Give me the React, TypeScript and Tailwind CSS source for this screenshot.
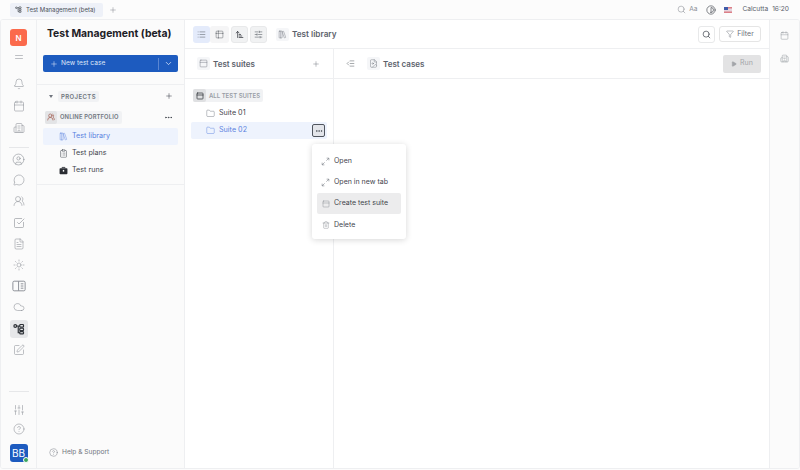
import {
  Bell, Calendar, Building2, CircleUser, MessageCircle, UsersRound, SquareCheckBig, FileText, Sun, Cloud,
  SquarePen, SlidersVertical, CircleHelp, Plus, ChevronDown, Ellipsis, LibraryBig, ClipboardList, List, Table2,
  ArrowUpNarrowWide, SlidersHorizontal, Search, Funnel, Play, Folder, PanelTop, Trash2, Equal, Contrast, IndentDecrease, FileImage,
} from "lucide-react";

const font = "[font-family:Inter,'Liberation_Sans',sans-serif]";

// flow icon used for the active rail item and the tab
function FlowIcon({ size }: { size: number }) {
  return (
    <svg width={size} height={size} viewBox="0 0 16 16" fill="none" stroke="currentColor" strokeWidth="1.6">
      <circle cx="3" cy="4" r="1.8" />
      <rect x="9" y="2" width="5" height="3.6" rx="1" />
      <rect x="9" y="7" width="5" height="3.2" rx="1" />
      <rect x="9" y="11.4" width="5" height="3.2" rx="1" />
      <path d="M5 4h4M7 4v9h2" />
    </svg>
  );
}

function BookPanelIcon() {
  return (
    <svg width="14" height="14" viewBox="0 0 16 16" fill="none" stroke="currentColor" strokeWidth="1.1">
      <rect x="1" y="2.5" width="14" height="11" rx="1.5" />
      <path d="M7.5 2.5v11M10 5.5h3M10 8h3M10 10.5h3" />
    </svg>
  );
}

function BriefcaseSolid() {
  return (
    <svg width="9" height="9" viewBox="0 0 16 16">
      <path d="M5.5 4V2.5h5V4" fill="none" stroke="#2a2d33" strokeWidth="1.5" />
      <rect x="1" y="4" width="14" height="10.5" rx="1.5" fill="#2a2d33" />
      <rect x="6.8" y="7" width="2.4" height="3" fill="#fff" />
    </svg>
  );
}

function ExpandIcon() {
  return (
    <svg width="9" height="9" viewBox="0 0 16 16" fill="none" stroke="currentColor" strokeWidth="1">
      <path d="M9.5 6.5 14 2M10 2h4v4M6.5 9.5 2 14M2 10v4h4" />
    </svg>
  );
}

function RailIcon({ children, active }: { children: React.ReactNode; active?: boolean }) {
  return (
    <div className={`w-[18px] h-[18px] rounded-[3px] flex items-center justify-center ${active ? "bg-[#e6e7e9] text-[#2f3339]" : "text-[#8b8f96]"}`}>
      {children}
    </div>
  );
}

function Rail() {
  return (
    <div className="w-[36px] shrink-0 border-r border-[#eeeff1] flex flex-col items-center pt-[9px] pb-[6px]">
      <div className="w-[17px] h-[17px] rounded-[3px] bg-[#fb6a4c] text-white text-[8px] font-semibold flex items-center justify-center">N</div>
      <Equal size={12} strokeWidth={1.1} className="text-[#8b8f96] mt-[5px]" />
      <div className="flex flex-col items-center gap-[4px] mt-[12px]">
        <RailIcon><Bell size={12} strokeWidth={1.1} /></RailIcon>
        <RailIcon><Calendar size={12} strokeWidth={1.1} /></RailIcon>
        <RailIcon><Building2 size={12} strokeWidth={1.1} /></RailIcon>
      </div>
      <div className="w-[20px] h-px bg-[#e6e7e9] mt-[10px]" />
      <div className="flex flex-col items-center gap-[3.2px] mt-[2px]">
        <RailIcon><CircleUser size={13} strokeWidth={1.1} /></RailIcon>
        <RailIcon><MessageCircle size={12} strokeWidth={1.1} /></RailIcon>
        <RailIcon><UsersRound size={12} strokeWidth={1.1} /></RailIcon>
        <RailIcon><SquareCheckBig size={12} strokeWidth={1.2} /></RailIcon>
        <RailIcon><FileText size={12} strokeWidth={1.1} /></RailIcon>
        <RailIcon><Sun size={12} strokeWidth={1.1} /></RailIcon>
        <RailIcon><BookPanelIcon /></RailIcon>
        <RailIcon><Cloud size={12} strokeWidth={1.1} /></RailIcon>
        <RailIcon active><FlowIcon size={12} /></RailIcon>
        <RailIcon><SquarePen size={12} strokeWidth={1.1} /></RailIcon>
      </div>
      <div className="flex-1" />
      <div className="w-[20px] h-px bg-[#e6e7e9] mb-[9px]" />
      <RailIcon><SlidersVertical size={12} strokeWidth={1.1} /></RailIcon>
      <div className="mt-[1px]"><RailIcon><CircleHelp size={12} strokeWidth={1.1} /></RailIcon></div>
      <div className="relative w-[18px] h-[18px] rounded-[3px] bg-[#1d5bbf] text-white text-[10px] flex items-center justify-center mt-[6px]">
        BB
        <span className="absolute right-[-1px] bottom-[-1px] w-[6px] h-[6px] rounded-full bg-[#3aa55d] border border-white" />
      </div>
    </div>
  );
}

function Sidebar() {
  return (
    <div className="w-[148px] shrink-0 border-r border-[#eeeff1] flex flex-col">
      <div className="h-[65px] px-[10px] border-b border-[#eeeff1] shrink-0">
        <div className="h-[28px] flex items-center text-[10.4px] font-bold text-[#1d2026] whitespace-nowrap">Test Management (beta)</div>
        <div className="mt-[7px] ml-[-4px] w-[135px] h-[17px] rounded-[2px] bg-[#1d5bbf] text-[#dfe8f8] flex items-center text-[6.6px]">
          <Plus size={8} strokeWidth={1.6} className="ml-[7px] mr-[3px]" />
          <span className="flex-1">New test case</span>
          <div className="w-px h-[12px] bg-[#5a86d2]" />
          <ChevronDown size={9} className="mx-[5px]" />
        </div>
      </div>
      <div className="px-[6px] flex flex-col">
        <div className="h-[22px] flex items-center">
          <span className="ml-[6px] mr-[5px] w-0 h-0 border-x-[2px] border-x-transparent border-t-[3px] border-t-[#70757e]" />
          <span className="px-[3px] h-[11px] rounded-[2px] bg-[#f1f2f4] text-[6px] font-semibold tracking-[0.4px] text-[#70757e] flex items-center">PROJECTS</span>
          <Plus size={8} strokeWidth={1.6} className="ml-auto mr-[5px] text-[#3a3f47]" />
        </div>
        <div className="h-[20px] flex items-center pl-[2px]">
          <div className="h-[13px] pr-[3px] rounded-[2px] bg-[#f1f2f4] flex items-center">
            <span className="w-[12px] h-[13px] rounded-[2px] bg-[#e3e4e6] flex items-center justify-center text-[#a0584a] mr-[3px]"><UsersRound size={8} /></span>
            <span className="text-[5.8px] font-semibold tracking-[0.15px] text-[#70757e]">ONLINE PORTFOLIO</span>
          </div>
          <Ellipsis size={9} className="ml-auto mr-[5px] text-[#3a3f47]" />
        </div>
        <div className="h-[17px] rounded-[2px] bg-[#eef3fd] flex items-center pl-[16px] text-[#5a82e0] text-[7.2px] mt-px">
          <LibraryBig size={9} strokeWidth={1.2} className="mr-[4px]" />
          Test library
        </div>
        <div className="h-[17px] flex items-center pl-[16px] text-[#3f444c] text-[7.2px]">
          <ClipboardList size={9} strokeWidth={1.3} className="mr-[4px]" />
          Test plans
        </div>
        <div className="h-[17px] flex items-center pl-[16px] text-[#3f444c] text-[7.2px]">
          <span className="mr-[4px]"><BriefcaseSolid /></span>
          Test runs
        </div>
      </div>
      <div className="h-px bg-[#eeeff1] mt-[5px]" />
      <div className="flex-1" />
      <div className="h-[31px] flex items-center pl-[12px] text-[#70757e] text-[6.6px]">
        <CircleHelp size={9} strokeWidth={1.2} className="mr-[4px]" />
        Help &amp; Support
      </div>
    </div>
  );
}

function ToolBtn({ children, tone }: { children: React.ReactNode; tone: string }) {
  return <div className={`h-[17px] rounded-[3px] flex items-center justify-center text-[#4b5058] ${tone}`}>{children}</div>;
}

function MenuRow({ icon, label, active }: { icon: React.ReactNode; label: string; active?: boolean }) {
  return (
    <div className={`h-[21.3px] rounded-[2px] flex items-center pl-[4px] text-[7px] text-[#3f444c] ${active ? "bg-[#ececed]" : ""}`}>
      <span className="w-[9px] mr-[4px] flex justify-center text-[#70757e]">{icon}</span>
      {label}
    </div>
  );
}

function Main() {
  return (
    <div className="flex-1 flex flex-col relative min-w-0">
      <div className="h-[29px] shrink-0 border-b border-[#eeeff1] flex items-center pl-[8px] pr-[8px]">
        <div className="flex">
          <ToolBtn tone="w-[17px] bg-[#e4ebfb]"><List size={9} strokeWidth={1.3} /></ToolBtn>
          <ToolBtn tone="w-[19px] bg-[#f5f5f6]"><Table2 size={9} strokeWidth={1.2} /></ToolBtn>
        </div>
        <div className="ml-[2px] flex gap-[2px]">
          <ToolBtn tone="w-[17px] bg-[#f1f2f3] border border-[#e8e9ea]"><ArrowUpNarrowWide size={9} strokeWidth={1.8} className="text-[#22262c]" /></ToolBtn>
          <ToolBtn tone="w-[17px] bg-[#f1f2f3] border border-[#e8e9ea]"><SlidersHorizontal size={9} strokeWidth={1.4} /></ToolBtn>
        </div>
        <span className="ml-[9px] w-[13px] h-[13px] rounded-[2px] bg-[#f5f6f8] flex items-center justify-center text-[#70757e]"><LibraryBig size={9} strokeWidth={1.2} /></span>
        <span className="ml-[3px] text-[8.2px] font-semibold text-[#5b616b]">Test library</span>
        <div className="ml-auto w-[17px] h-[17px] rounded-[3px] border border-[#e8e9ea] flex items-center justify-center text-[#4b5058]"><Search size={9} /></div>
        <div className="ml-[4px] w-[42px] h-[16px] rounded-[3px] border border-[#e5e5e5] flex items-center justify-center text-[7px] text-[#6a6f77]">
          <Funnel size={8} strokeWidth={1.3} className="mr-[3px]" />
          Filter
        </div>
      </div>
      <div className="flex-1 flex min-h-0">
        <div className="w-[149px] shrink-0 border-r border-[#eeeff1] flex flex-col">
          <div className="h-[30px] shrink-0 border-b border-[#eeeff1] flex items-center pl-[12px] pr-[13px]">
            <span className="w-[13px] h-[13px] rounded-[2px] bg-[#f5f6f8] flex items-center justify-center text-[#70757e] mr-[3px]"><PanelTop size={9} strokeWidth={1.2} /></span>
            <span className="text-[8px] font-semibold text-[#5b616b]">Test suites</span>
            <Plus size={8} strokeWidth={1.4} className="ml-auto text-[#70757e]" />
          </div>
          <div className="px-[6px] pt-[10px] flex flex-col">
            <div className="h-[13px] w-fit ml-[2px] pr-[3px] rounded-[2px] bg-[#f1f2f4] flex items-center">
              <span className="w-[13px] h-[13px] rounded-[2px] bg-[#dfe0e2] flex items-center justify-center text-[#22262c] mr-[3px]"><PanelTop size={8} /></span>
              <span className="text-[6px] font-semibold text-[#9a9ea6]">ALL TEST SUITES</span>
            </div>
            <div className="h-[17px] mt-[3px] flex items-center pl-[15px] text-[7.2px] text-[#3f444c]">
              <Folder size={9} strokeWidth={1.2} className="mr-[4px] text-[#70757e]" />
              Suite 01
            </div>
            <div className="h-[17px] rounded-[2px] bg-[#eef3fd] flex items-center pl-[15px] text-[7.2px] text-[#5a82e0]">
              <Folder size={9} strokeWidth={1.2} className="mr-[4px]" />
              Suite 02
              <span className="ml-auto mr-[2px] w-[13px] h-[13px] rounded-[2px] bg-[#e3e5ea] border border-[#50555e] flex items-center justify-center text-[#3a3f47]"><Ellipsis size={8} /></span>
            </div>
          </div>
        </div>
        <div className="flex-1 flex flex-col min-w-0">
          <div className="h-[30px] shrink-0 border-b border-[#eeeff1] flex items-center pl-[12px] pr-[8px]">
            <IndentDecrease size={9} strokeWidth={1.3} className="text-[#4b5058] mr-[12px]" />
            <span className="w-[13px] h-[13px] rounded-[2px] bg-[#f5f6f8] flex items-center justify-center text-[#70757e] mr-[3px]"><FileImage size={9} strokeWidth={1.2} /></span>
            <span className="text-[8px] font-semibold text-[#5b616b]">Test cases</span>
            <div className="ml-auto w-[38px] h-[18px] rounded-[2px] bg-[#e3e3e4] flex items-center justify-center text-[7px] text-[#a3a5a9]">
              <Play size={6} fill="currentColor" className="mr-[3px]" />
              Run
            </div>
          </div>
        </div>
      </div>
      <div className="absolute left-[127px] top-[124px] w-[94px] h-[95px] rounded-[3px] bg-white shadow-[0_1px_6px_rgba(0,0,0,0.16)] px-[5px] pt-[6.5px]">
        <MenuRow icon={<ExpandIcon />} label="Open" />
        <MenuRow icon={<ExpandIcon />} label="Open in new tab" />
        <MenuRow icon={<PanelTop size={8} strokeWidth={1.1} />} label="Create test suite" active />
        <MenuRow icon={<Trash2 size={8} strokeWidth={1.1} />} label="Delete" />
      </div>
    </div>
  );
}

export default function App() {
  return (
    <div className={`w-[800px] h-[470px] bg-[#fcfcfc] flex flex-col overflow-hidden ${font}`}>
      <div className="h-[19px] shrink-0 flex items-center pl-[10px] pr-[11px] text-[6.6px] text-[#5b616b]">
        <div className="h-[14px] w-[93px] rounded-[2px] bg-[#eef1f8] flex items-center pl-[5px] text-[#4b5058] text-[6px] whitespace-nowrap">
          <span className="mr-[4px]"><FlowIcon size={7} /></span>
          Test Management (beta)
        </div>
        <Plus size={8} strokeWidth={1.3} className="ml-[6px] text-[#70757e]" />
        <Search size={9} strokeWidth={1.2} className="ml-auto text-[#70757e] mr-[3px]" />
        <span className="text-[#8b8f96]">Aa</span>
        <Contrast size={10} strokeWidth={1.5} className="ml-[9px] text-[#3a3f47]" />
        <span className="ml-[8px] w-[8px] h-[6px] bg-[linear-gradient(#d96a72,#e9e9f2,#d96a72)] relative">
          <span className="absolute left-0 top-0 w-[4px] h-[3px] bg-[#3f5aa8]" />
        </span>
        <span className="ml-[10px]">Calcutta</span>
        <span className="ml-[4px]">16:20</span>
      </div>
      <div className="flex-1 mb-px flex rounded-[3px] border border-[#eeeff1] bg-white overflow-hidden min-h-0">
        <div className="flex bg-[#fbfbfb]">
          <Rail />
          <Sidebar />
        </div>
        <Main />
        <div className="w-[30px] shrink-0 border-l border-[#eeeff1] bg-[#fbfbfb] flex flex-col items-center pt-[11px] gap-[9px] text-[#8b8f96]">
          <Calendar size={9} strokeWidth={1.2} />
          <Building2 size={9} strokeWidth={1.2} className="mt-[5px]" />
        </div>
      </div>
    </div>
  );
}
